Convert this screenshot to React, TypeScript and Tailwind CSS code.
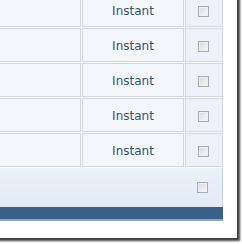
import React from "react";

function Checkbox() {
  return (
    <div className="w-[11px] h-[11px] border border-[#a9adb2] bg-gradient-to-br from-[#d6d9dc] to-[#f7f8f9] shadow-[inset_0_0_0_1px_#eceef0]" />
  );
}

function Row({ text }: { text: string }) {
  return (
    <div className="flex gap-px h-[34px]">
      <div className="flex-1 border border-[#d4d8dc] bg-[#f3f6fa]" />
      <div className="w-[102px] border border-[#d4d8dc] bg-[#f3f6fa] flex items-center justify-center pt-[2px] text-[12px] text-[#3a5270] [font-family:'DejaVu_Sans',sans-serif]">
        {text}
      </div>
      <div className="w-[38px] border border-[#d4d8dc] bg-[#eef2f8] flex items-center justify-center pt-[2px]">
        <div className="ml-[-1px]">
          <Checkbox />
        </div>
      </div>
    </div>
  );
}

export default function App() {
  const rows = ["Instant", "Instant", "Instant", "Instant", "Instant"];
  return (
    <div className="relative w-[242px] h-[244px] overflow-hidden bg-white">
      <div className="-ml-[20px] -mt-[7px] w-[257px] bg-white pr-[14px] pb-[17px] shadow-[3px_3px_2px_rgba(0,0,0,0.75)]">
        <div className="flex flex-col gap-px bg-[#fbfcfd]">
          {rows.map((t, i) => (
            <Row key={i} text={t} />
          ))}
          <div className="h-[39px] bg-gradient-to-b from-[#edf2f9] to-[#e3eaf4] border-r border-[#c9d5e2] flex items-center justify-end">
            <div className="w-[38px] flex justify-center">
              <div className="ml-[-1px]">
                <Checkbox />
              </div>
            </div>
          </div>
        </div>
        <div className="h-[14px] bg-[#3b5f89] border-b-2 border-[#8ea7c1]" />
      </div>
    </div>
  );
}
